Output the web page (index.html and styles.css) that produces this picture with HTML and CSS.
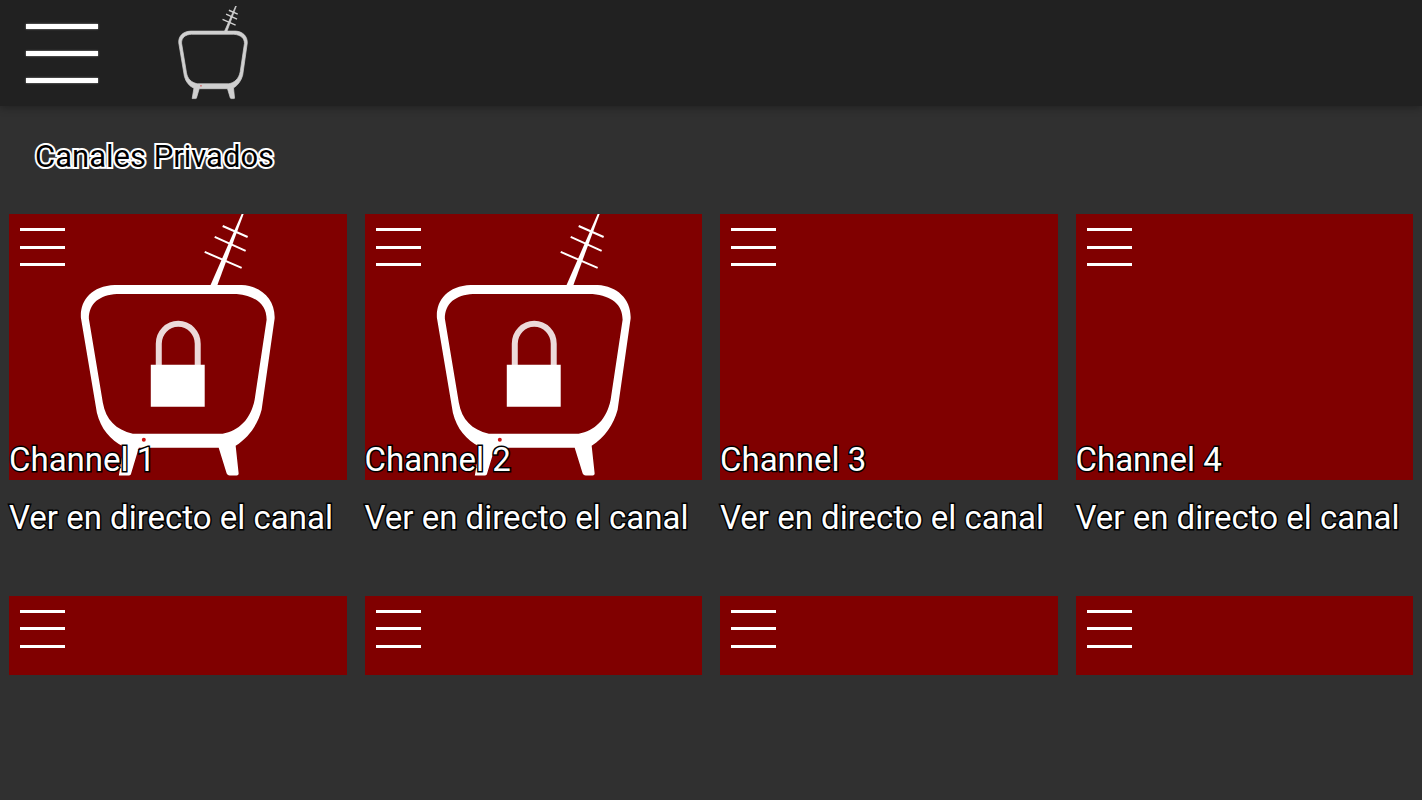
FILE: index.html
```html
<!DOCTYPE html>
<html lang="es">

<head>
    <meta charset="UTF-8">
    <meta name="viewport" content="width=device-width, initial-scale=1.0">
    <link rel="stylesheet" href="styles.css">

    <title>Canales Privados</title>
</head>

<body>

    <!-- iconos -->
    <svg class="iconos" aria-hidden="true">
        <symbol id="tele" viewBox="0 0 338 266">
            <path fill="currentColor" fill-rule="evenodd" d="M106 71H233C253 72 267 86 266 105L253 196C249 211 240 224 227 232L230 260Q230 262 228 262H221Q219 262 218 260L210 234H130L122 261Q121 262 120 262H110L115 233C101 226 92 215 88 199L72 104C71 87 82 72 106 71ZM108 80C91 81 80 89 80 105L94 189C97 206 107 216 124 220H214C230 217 242 206 246 186L258 106C258 90 247 82 228 80Z"/>
            <path fill="currentColor" d="M201 73L233 0H235L208 73Z"/>
            <path class="varillas" fill="none" stroke="currentColor" d="M214 12L239 23M206 23L237 37M196 38L233 54"/>
            <circle cx="135" cy="226" r="2" fill="#d01010" stroke="none"/>
        </symbol>
        <symbol id="candado" viewBox="0 0 338 266">
            <path fill="none" stroke="#ecd9d9" stroke-width="6" d="M150 152V130A19.5 20 0 0 1 189 130V152"/>
            <path fill="#fff" d="M142 151H196V193H142Z"/>
        </symbol>
    </svg>

    <header class="barra">
        <button class="menu menu-grande" aria-label="Menú"><span></span><span></span><span></span></button>
        <svg class="logo"><use href="#tele"/></svg>
    </header>

    <h1 class="titulo">Canales Privados</h1>

    <main class="canales">
        <article class="canal">
            <div class="imagen">
                <svg class="dibujo"><use href="#tele"/><use href="#candado"/></svg>
                <button class="menu" aria-label="Opciones"><span></span><span></span><span></span></button>
                <h2 class="nombre">Channel 1</h2>
            </div>
            <p class="texto">Ver en directo el canal</p>
        </article>
        <article class="canal">
            <div class="imagen">
                <svg class="dibujo"><use href="#tele"/><use href="#candado"/></svg>
                <button class="menu" aria-label="Opciones"><span></span><span></span><span></span></button>
                <h2 class="nombre">Channel 2</h2>
            </div>
            <p class="texto">Ver en directo el canal</p>
        </article>
        <article class="canal">
            <div class="imagen">
                <button class="menu" aria-label="Opciones"><span></span><span></span><span></span></button>
                <h2 class="nombre">Channel 3</h2>
            </div>
            <p class="texto">Ver en directo el canal</p>
        </article>
        <article class="canal">
            <div class="imagen">
                <button class="menu" aria-label="Opciones"><span></span><span></span><span></span></button>
                <h2 class="nombre">Channel 4</h2>
            </div>
            <p class="texto">Ver en directo el canal</p>
        </article>

        <article class="canal">
            <div class="imagen">
                <button class="menu" aria-label="Opciones"><span></span><span></span><span></span></button>
            </div>
        </article>
        <article class="canal">
            <div class="imagen">
                <button class="menu" aria-label="Opciones"><span></span><span></span><span></span></button>
            </div>
        </article>
        <article class="canal">
            <div class="imagen">
                <button class="menu" aria-label="Opciones"><span></span><span></span><span></span></button>
            </div>
        </article>
        <article class="canal">
            <div class="imagen">
                <button class="menu" aria-label="Opciones"><span></span><span></span><span></span></button>
            </div>
        </article>
    </main>

    <footer class="pie"></footer>

</body>
</html>
```

FILE: styles.css
```css
* {
    box-sizing: border-box;
}

body {
    margin: 0;
    height: 100vh;
    display: flex;
    flex-direction: column;
    background: #303030;
    color: #fff;
    font-family: Roboto, sans-serif;
}

.iconos {
    display: none;
}

.barra {
    flex: none;
    display: flex;
    align-items: center;
    gap: 55px;
    height: 106px;
    padding: 0 26px;
    background: #212121;
    box-shadow: 0 2px 8px rgba(0, 0, 0, 0.3);
}

.logo {
    --varilla: 4;
    width: 120px;
    height: 94px;
    color: #d0d0d0;
    stroke: currentColor;
    stroke-width: 2;
}

.varillas {
    stroke-width: var(--varilla, 2);
}

.menu {
    display: flex;
    flex-direction: column;
    justify-content: space-between;
    width: 45px;
    height: 38px;
    padding: 0;
    border: none;
    background: none;
    cursor: pointer;
}

.menu span {
    height: 3px;
    background: #fff;
}

.menu-grande {
    width: 72px;
    height: 59px;
}

.menu-grande span {
    height: 5px;
    box-shadow: 0 0 2px #aaa;
}

.titulo {
    flex: none;
    margin: 0;
    padding: 32px 35px 38px;
    font-size: 31px;
    line-height: 38px;
    font-weight: 400;
    color: #000;
    -webkit-text-stroke: 4px #fff;
    paint-order: stroke fill;
}

.canales {
    flex: 1;
    min-height: 0;
    overflow: hidden;
    display: grid;
    grid-template-columns: repeat(4, 1fr);
    align-content: start;
    gap: 58px 18px;
    padding: 0 9px;
}

.imagen {
    position: relative;
    aspect-ratio: 338 / 266;
    padding: 14px 11px;
    background: #800000;
}

.dibujo {
    position: absolute;
    inset: 0;
    width: 100%;
    height: 100%;
}

.imagen .menu {
    position: relative;
}

.nombre,
.texto {
    margin: 0;
    font-size: 33px;
    line-height: 40px;
    font-weight: 400;
    -webkit-text-stroke: 3px #000;
    paint-order: stroke fill;
}

.nombre {
    position: absolute;
    left: 0;
    bottom: 0;
}

.texto {
    padding-top: 18px;
    white-space: nowrap;
}

.pie {
    flex: none;
    height: 125px;
}
```
